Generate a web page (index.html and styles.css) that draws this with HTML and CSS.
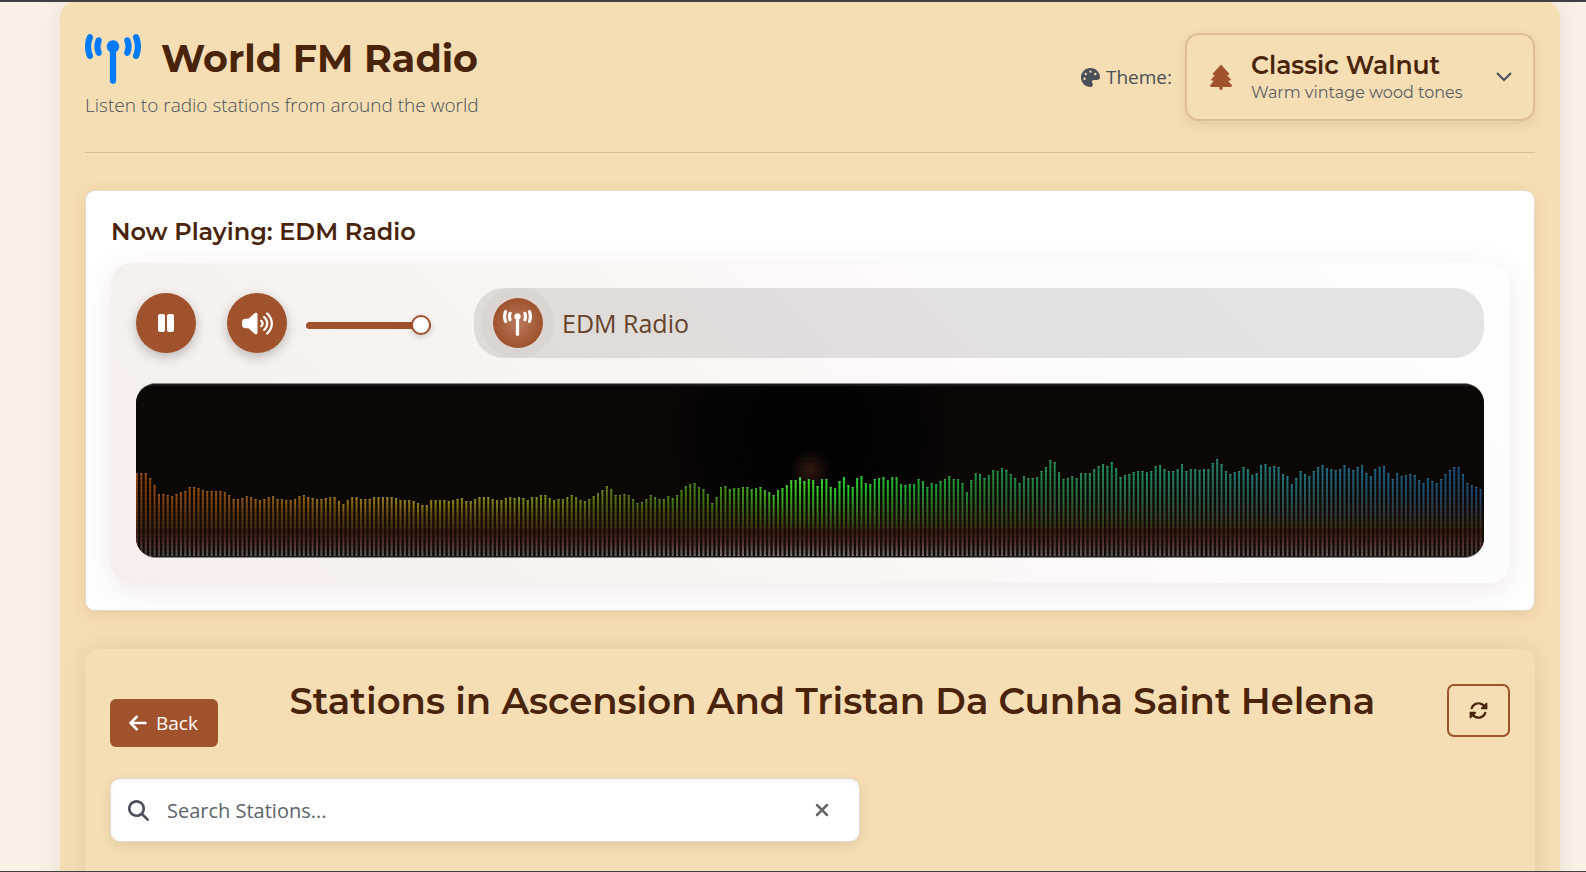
FILE: index.html
```html
<!DOCTYPE html>
<html lang="en">
<head>
<meta charset="utf-8">
<title>World FM Radio</title>
<link rel="stylesheet" href="styles.css">
</head>
<body>
<svg class="sprite" aria-hidden="true">
  <symbol id="tower" viewBox="0 0 576 512"><path d="M80.3 44C69.8 69.9 64 98.2 64 128s5.8 58.1 16.3 84c6.600 16.400-1.300 35-17.700 41.700s-35-1.300-41.700-17.700C7.400 202.600 0 166.100 0 128S7.400 53.400 20.900 20C27.600 3.600 46.200-4.300 62.600 2.300S86.900 27.600 80.300 44zM555.100 20C568.600 53.400 576 89.900 576 128s-7.400 74.600-20.900 108c-6.600 16.400-25.300 24.300-41.700 17.700s-24.300-25.300-17.700-41.700c10.500-25.900 16.300-54.200 16.300-84s-5.800-58.100-16.300-84C489.100 27.600 497 9 513.400 2.300s35 1.300 41.700 17.700zM352 128c0 23.700-12.900 44.400-32 55.400V480c0 17.700-14.300 32-32 32s-32-14.300-32-32V183.400c-19.100-11.100-32-31.700-32-55.400c0-35.300 28.700-64 64-64s64 28.700 64 64zM170.600 76.800C163.800 92.400 160 109.700 160 128s3.800 35.600 10.600 51.200c7.100 16.200-.3 35.100-16.500 42.100s-35.100-.3-42.100-16.500c-10.300-23.600-16-49.600-16-76.800s5.700-53.200 16-76.800c7.100-16.200 25.900-23.600 42.100-16.500s23.600 25.900 16.500 42.100zM464 51.200c10.300 23.600 16 49.600 16 76.800s-5.700 53.200-16 76.800c-7.100 16.200-25.900 23.600-42.100 16.500s-23.600-25.900-16.500-42.100c6.800-15.600 10.600-32.900 10.600-51.200s-3.800-35.600-10.600-51.200c-7.100-16.200 .3-35.100 16.500-42.100s35.100 .3 42.100 16.500z"/></symbol>
  <symbol id="palette" viewBox="0 0 512 512"><path fill-rule="evenodd" d="M512 256c0 .9 0 1.800 0 2.700c-.4 36.500-33.600 61.300-70.100 61.300H344c-26.500 0-48 21.500-48 48c0 3.400 .4 6.700 1 9.900c2.100 10.200 6.500 20 10.800 29.900c6.100 13.800 12.100 27.500 12.100 42c0 31.800-21.600 60.700-53.400 62c-3.500 .1-7 .2-10.600 .2C114.600 512 0 397.400 0 256S114.600 0 256 0S512 114.600 512 256zM128 288a32 32 0 1 0 -64 0 32 32 0 1 0 64 0zm0-96a32 32 0 1 0 0-64 32 32 0 1 0 0 64zM288 96a32 32 0 1 0 -64 0 32 32 0 1 0 64 0zm96 96a32 32 0 1 0 0-64 32 32 0 1 0 0 64z"/></symbol>
  <symbol id="tree" viewBox="0 0 448 512"><path d="M210.600 5.900L62 169.400c-3.900 4.200-6 9.800-6 15.500C56 197.700 66.300 208 79.100 208H104L30.600 281.400c-4.200 4.200-6.600 10-6.600 16C24 309.900 34.100 320 46.600 320H80L5.400 409.500C1.900 413.700 0 419 0 424.500c0 13 10.500 23.500 23.500 23.500H192v32c0 17.700 14.300 32 32 32s32-14.300 32-32V448H424.500c13 0 23.500-10.500 23.500-23.500c0-5.500-1.900-10.800-5.400-15L368 320h33.400c12.500 0 22.600-10.100 22.600-22.600c0-6-2.400-11.800-6.600-16L344 208h24.900c12.700 0 23.100-10.300 23.100-23.100c0-5.700-2.100-11.300-6-15.500L237.400 5.900C234 2.100 229.100 0 224 0s-10 2.100-13.400 5.900z"/></symbol>
  <symbol id="volume" viewBox="0 0 640 512"><path d="M533.600 32.500C598.500 85.200 640 165.800 640 256s-41.500 170.700-106.400 223.500c-10.300 8.400-25.400 6.800-33.800-3.500s-6.800-25.400 3.500-33.800C557.500 398.200 592 331.200 592 256s-34.500-142.200-88.700-186.300c-10.300-8.400-11.800-23.500-3.500-33.800s23.500-11.800 33.800-3.500zM473.100 107c43.200 35.200 70.900 88.900 70.900 149s-27.700 113.800-70.900 149c-10.300 8.400-25.400 6.800-33.800-3.500s-6.800-25.400 3.500-33.800C475.300 341.300 496 301.100 496 256s-20.700-85.300-53.200-111.800c-10.300-8.400-11.800-23.500-3.500-33.800s23.500-11.800 33.800-3.500zm-60.500 74.500C434.100 199.100 448 225.900 448 256s-13.900 56.900-35.400 74.500c-10.300 8.400-25.400 6.800-33.800-3.500s-6.800-25.400 3.500-33.800C393.100 284.400 400 271 400 256s-6.900-28.400-17.700-37.300c-10.300-8.400-11.800-23.500-3.500-33.800s23.500-11.800 33.800-3.500zM301.100 34.800C312.600 40 320 51.400 320 64V448c0 12.600-7.400 24-18.900 29.200s-25 3.100-34.400-5.300L131.800 352H64c-35.300 0-64-28.700-64-64V224c0-35.300 28.700-64 64-64h67.800L266.700 40.100c9.400-8.400 22.900-10.400 34.400-5.300z"/></symbol>
  <symbol id="pause" viewBox="0 0 16 18"><rect width="7" height="18" rx="2"/><rect x="9" width="7" height="18" rx="2"/></symbol>
  <symbol id="arrow-left" viewBox="0 0 448 512"><path d="M9.400 233.400c-12.500 12.500-12.500 32.800 0 45.300l160 160c12.500 12.500 32.800 12.500 45.300 0s12.500-32.800 0-45.300L109.200 288 416 288c17.700 0 32-14.300 32-32s-14.300-32-32-32l-306.700 0L214.600 118.600c12.500-12.500 12.500-32.800 0-45.300s-32.800-12.500-45.300 0l-160 160z"/></symbol>
  <symbol id="search" viewBox="0 0 512 512"><path d="M416 208c0 45.900-14.900 88.300-40 122.700L502.600 457.400c12.500 12.500 12.500 32.800 0 45.300s-32.800 12.500-45.300 0L330.700 376c-34.400 25.200-76.800 40-122.700 40C93.100 416 0 322.900 0 208S93.100 0 208 0S416 93.100 416 208zM208 352a144 144 0 1 0 0-288 144 144 0 1 0 0 288z"/></symbol>
  <symbol id="rotate" viewBox="0 0 512 512"><path d="M142.900 142.900c62.200-62.200 162.700-62.500 225.300-1L327 183c-6.900 6.900-8.900 17.200-5.200 26.200s12.500 14.800 22.200 14.800H480c9 0 16-7 16-16V64c0-9.700-5.800-14-12-16s-19.300 1-26.200 7L413.400 96.600c-87.600-86.500-228.700-86.200-315.800 1C73.200 122 55.600 150.700 44.800 181.400c-5.900 16.700 2.900 34.900 19.500 40.800s34.900-2.900 40.800-19.500c7.700-21.800 20.200-42.300 37.800-59.800zM16 304V448c0 9.700 5.800 14 12 16s19.300-1 26.200-7l44.400-41.600c87.600 86.500 228.700 86.200 315.800-1c24.400-24.400 42.100-53.100 52.900-83.700c5.900-16.700-2.900-34.900-19.500-40.800s-34.900 2.900-40.800 19.500c-7.700 21.800-20.200 42.300-37.800 59.800c-62.200 62.200-162.700 62.500-225.300 1L185 329c6.900-6.900 8.900-17.200 5.200-26.200s-12.500-14.800-22.200-14.800H32c-9 0-16 7-16 16z"/></symbol>
  <symbol id="chevron" viewBox="0 0 16 10"><path d="M1 1l7 7 7-7" fill="none" stroke="currentColor" stroke-width="2"/></symbol>
  <symbol id="xmark" viewBox="0 0 14 14"><path d="M2 2l10 10M12 2L2 12" fill="none" stroke="currentColor" stroke-width="2.500" stroke-linecap="round"/></symbol>
</svg>
<div class="window">
  <main class="container">
    <header class="header">
      <div>
        <h1 class="brand"><svg class="icon brand-icon"><use href="#tower"/></svg>World FM Radio</h1>
        <p class="tagline">Listen to radio stations from around the world</p>
      </div>
      <div class="theme">
        <span class="theme-label" id="theme-label"><svg class="icon palette-icon"><use href="#palette"/></svg>Theme:</span>
        <button class="theme-button" type="button" aria-describedby="theme-label">
          <svg class="icon tree-icon"><use href="#tree"/></svg>
          <span class="theme-text">
            <span class="theme-name">Classic Walnut</span>
            <span class="theme-note">Warm vintage wood tones</span>
          </span>
          <svg class="icon chevron-icon"><use href="#chevron"/></svg>
        </button>
      </div>
    </header>

    <section class="now-playing">
      <h2 class="now-title">Now Playing: EDM Radio</h2>
      <div class="player">
        <div class="controls">
          <button class="round-button" type="button" aria-label="Pause"><svg class="icon pause-icon"><use href="#pause"/></svg></button>
          <button class="round-button" type="button" aria-label="Mute"><svg class="icon volume-icon"><use href="#volume"/></svg></button>
          <input class="volume" type="range" min="0" max="100" value="100" aria-label="Volume">
          <div class="station">
            <span class="halo"><span class="station-badge"><svg class="icon badge-icon"><use href="#tower"/></svg></span></span>
            <span class="station-name">EDM Radio</span>
          </div>
        </div>
        <div class="visualizer"><canvas class="spectrum" id="spectrum"></canvas></div>
      </div>
    </section>

    <section class="stations">
      <div class="stations-head">
        <button class="back" type="button"><svg class="icon back-icon"><use href="#arrow-left"/></svg>Back</button>
        <h2 class="stations-title">Stations in Ascension And Tristan Da Cunha Saint Helena</h2>
        <button class="refresh" type="button" aria-label="Refresh"><svg class="icon refresh-icon"><use href="#rotate"/></svg></button>
      </div>
      <div class="search">
        <svg class="icon search-icon"><use href="#search"/></svg>
        <input class="search-input" type="text" placeholder="Search Stations..." aria-label="Search Stations">
        <button class="clear" type="button" aria-label="Clear search"><svg class="icon clear-icon"><use href="#xmark"/></svg></button>
      </div>
    </section>
  </main>
</div>
<script src="spectrum.js"></script>
</body>
</html>
```
FILE: styles.css
```css
* { box-sizing: border-box; }

body {
  margin: 0;
  background: #faf0e6;
  color: #4a230b;
  font-family: "Open Sans", "Noto Sans", sans-serif;
  font-size: 20px;
}

h1, h2, p { margin: 0; }
button, input { font: inherit; color: inherit; }
button { cursor: pointer; }

.sprite { position: absolute; width: 0; height: 0; }
.icon { display: block; flex: none; fill: currentColor; }

.window {
  height: 100vh;
  overflow: hidden;
  padding: 0 26px 0 60px;
  border-top: 2px solid #404040;
  border-bottom: 1px solid #404040;
}

.container {
  min-height: 960px;
  padding: 31px 25px;
  border-radius: 15px;
  background: #f5deb3;
  box-shadow: 0 0 24px rgba(74, 35, 11, 0.08);
}

.header {
  display: flex;
  justify-content: space-between;
  align-items: flex-start;
  padding-bottom: 31px;
  border-bottom: 1px solid #dfbe92;
}

.brand {
  display: flex;
  align-items: center;
  gap: 20px;
  font: 700 38px/52px Montserrat, Inter, sans-serif;
}
.brand-icon { width: 56px; height: 50px; color: #007bff; }
.tagline {
  padding-top: 7px;
  color: #495057;
  font-size: 19px;
  font-weight: 300;
  line-height: 27px;
}

.theme { display: flex; align-items: center; gap: 13px; }
.theme-label {
  display: flex;
  align-items: center;
  gap: 6px;
  color: #495057;
  font-size: 19px;
}
.palette-icon { width: 19px; height: 19px; }
.theme-button {
  display: flex;
  align-items: center;
  width: 350px;
  height: 88px;
  padding: 0 21px 0 23px;
  border: 2px solid #dfbe92;
  border-radius: 14px;
  background: #f5deb3;
  box-shadow: 0 4px 12px rgba(74, 35, 11, 0.1);
  font-family: Montserrat, Inter, sans-serif;
  text-align: left;
}
.tree-icon { width: 22px; height: 25px; color: #a0522d; }
.theme-text { flex: 1; margin-left: 19px; }
.theme-name { display: block; font-size: 25px; font-weight: 600; line-height: 30px; }
.theme-note { display: block; color: #5a5f64; font-size: 16px; line-height: 25px; }
.chevron-icon { width: 16px; height: 10px; color: #495057; }

.now-playing {
  margin-top: 37px;
  padding: 25px 25px 27px;
  border: 1px solid #e6d8d2;
  border-radius: 10px;
  background: #fff;
  box-shadow: 0 4px 16px rgba(160, 82, 45, 0.14);
  overflow: clip;
}
.now-title { font: 600 24px/32px Montserrat, Inter, sans-serif; }
.player {
  margin-top: 15px;
  padding: 25px;
  border-radius: 20px;
  background: linear-gradient(45deg, #f7eeeb, #f6f1ee 20%, #f9f5f2 45%, #fdfafa 65%, #fefefe);
  box-shadow: 0 8px 32px rgba(120, 40, 30, 0.1);
}
.controls { display: flex; align-items: center; }
.round-button {
  display: grid;
  place-items: center;
  width: 60px;
  height: 60px;
  margin-right: 31px;
  padding: 0;
  border: 0;
  border-radius: 50%;
  background: #a0522d;
  color: #fff;
  box-shadow: 0 4px 12px rgba(0, 0, 0, 0.24);
}
.round-button + .round-button { margin-right: 19px; }
.pause-icon { width: 16px; height: 18px; }
.volume-icon { width: 31px; height: 25px; }

.volume {
  appearance: none;
  width: 125px;
  height: 20px;
  margin: 5px 43px 0 0;
  background: transparent;
}
.volume::-webkit-slider-runnable-track {
  height: 7px;
  border-radius: 4px;
  background: #a0522d;
}
.volume::-webkit-slider-thumb {
  appearance: none;
  width: 20px;
  height: 20px;
  margin-top: -7px;
  border: 2px solid #a0522d;
  border-radius: 50%;
  background: #fff;
  box-shadow: 0 2px 6px rgba(0, 0, 0, 0.2);
}

.station {
  display: flex;
  flex: 1;
  align-items: center;
  height: 70px;
  padding-left: 7px;
  border-radius: 30px;
  background: rgba(0, 0, 0, 0.1);
}
.halo {
  display: grid;
  place-items: center;
  width: 73px;
  height: 70px;
  border-radius: 35px;
  background: rgba(160, 82, 45, 0.04);
}
.station-badge {
  display: grid;
  place-items: center;
  width: 50px;
  height: 50px;
  border-radius: 50%;
  background: radial-gradient(circle, #b87a5e, #a0522d 70%);
  color: #fff;
}
.badge-icon { width: 29px; height: 26px; }
.station-name { margin-left: 8px; color: #65432b; font-size: 25px; line-height: 36px; }

.visualizer {
  height: 175px;
  margin-top: 25px;
  border: 1px solid #8a8787;
  border-width: 1px 0;
  border-radius: 20px;
  background: #0c0805;
  overflow: hidden;
}
.spectrum { display: block; width: 100%; height: 100%; }

.stations {
  min-height: 300px;
  margin-top: 38px;
  padding: 26px 25px;
  border-radius: 15px;
  background: #f5deb3;
  box-shadow: 0 0 24px rgba(74, 35, 11, 0.1);
}
.stations-head { display: flex; justify-content: space-between; align-items: flex-start; }
.back {
  display: flex;
  align-items: center;
  gap: 9px;
  height: 48px;
  margin-top: 24px;
  padding: 0 20px 0 19px;
  border: 0;
  border-radius: 6px;
  background: #a0522d;
  color: #fff;
  font-size: 19px;
  font-weight: 500;
}
.back-icon { width: 18px; height: 20px; }
.stations-title { font: 600 37px/52px Montserrat, Inter, sans-serif; }
.refresh {
  display: grid;
  place-items: center;
  width: 63px;
  height: 53px;
  margin-top: 9px;
  border: 2px solid #a0522d;
  border-radius: 7px;
  background: transparent;
}
.refresh-icon { width: 19px; height: 19px; }

.search {
  display: flex;
  align-items: center;
  width: 750px;
  max-width: 100%;
  height: 64px;
  margin-top: 31px;
  padding: 0 30px 0 17px;
  border: 1px solid #e6d8d2;
  border-radius: 10px;
  background: #fff;
  box-shadow: 0 4px 12px rgba(74, 35, 11, 0.1), inset 0 2px 4px rgba(0, 0, 0, 0.04);
}
.search-icon { width: 21px; height: 21px; color: #495057; }
.search-input {
  flex: 1;
  min-width: 0;
  margin-left: 18px;
  padding: 0;
  border: 0;
  outline: 0;
  background: transparent;
  font-size: 20px;
}
.search-input::placeholder { color: #5c636a; opacity: 1; }
.clear { padding: 0; border: 0; background: transparent; color: #666; }
.clear-icon { width: 14px; height: 14px; }
```
FILE: spectrum.js
```js
// Height in pixels of each frequency band, low to high.
const levels = [
  84,84,84,79,72,63,63,62,61,63,65,66,70,70,69,67,66,66,66,66,65,62,58,58,59,61,60,58,57,58,60,61,58,58,
  57,57,58,61,62,60,59,58,58,59,60,60,56,53,57,60,60,58,58,58,60,60,60,60,60,59,57,57,57,56,54,52,52,57,
  57,57,57,56,57,58,59,56,56,58,60,60,60,58,57,57,59,60,59,60,59,57,60,60,62,62,59,57,58,58,60,62,60,
  57,56,58,61,64,67,71,68,62,62,63,62,58,54,55,58,62,60,58,58,61,59,62,67,71,73,74,70,68,63,54,60,70,71,
  68,69,69,70,70,68,69,70,67,65,62,67,69,72,77,77,80,76,78,77,71,78,78,70,69,76,80,72,70,79,81,74,73,78,
  79,80,77,80,80,73,72,73,73,78,76,70,74,73,76,78,81,78,78,74,65,77,84,83,79,82,87,86,89,87,83,79,74,81,79,
  79,80,86,90,97,95,85,78,79,81,79,84,84,84,88,91,93,91,95,89,80,82,83,85,86,86,85,86,91,92,88,86,86,88,
  93,86,88,88,87,88,88,94,98,93,86,83,85,86,90,88,82,84,92,93,90,91,90,83,81,73,79,86,83,81,86,90,92,89,
  88,87,88,92,89,87,90,92,84,81,88,90,91,84,78,84,81,82,83,82,77,74,79,76,74,78,83,87,90,90,83,74,72,70,68
];

// Colour stops across the width: position, then red, green, blue.
const stops = [
  [0, 150, 68, 16], [0.1, 155, 96, 20], [0.2, 165, 140, 22], [0.3, 130, 150, 22],
  [0.37, 85, 125, 20], [0.43, 62, 145, 22], [0.49, 60, 230, 40], [0.53, 35, 225, 45],
  [0.58, 30, 180, 50], [0.64, 30, 145, 66], [0.75, 30, 145, 98], [0.85, 30, 122, 130],
  [0.93, 26, 96, 134], [1, 22, 78, 128]
];

function colourAt(t) {
  let i = 1;
  while (i < stops.length - 1 && stops[i][0] < t) i++;
  const a = stops[i - 1], b = stops[i];
  const k = (t - a[0]) / (b[0] - a[0]);
  return [1, 2, 3].map(n => Math.round(a[n] + (b[n] - a[n]) * k));
}

const canvas = document.getElementById('spectrum');
const w = canvas.width = canvas.clientWidth;
const h = canvas.height = canvas.clientHeight;
const ctx = canvas.getContext('2d');

ctx.fillStyle = '#0c0805';
ctx.fillRect(0, 0, w, h);

// Dark pool in the middle with a faint ember at its heart.
let g = ctx.createRadialGradient(w / 2, 50, 60, w / 2, 50, 165);
g.addColorStop(0, 'rgba(3,3,3,1)');
g.addColorStop(1, 'rgba(3,3,3,0)');
ctx.fillStyle = g;
ctx.fillRect(0, 0, w, h);
g = ctx.createRadialGradient(w / 2, 86, 0, w / 2, 86, 20);
g.addColorStop(0, 'rgba(58,28,16,0.9)');
g.addColorStop(1, 'rgba(58,28,16,0)');
ctx.fillStyle = g;
ctx.fillRect(0, 0, w, h);

// Glow behind the lower part of the bars.
g = ctx.createLinearGradient(0, h - 60, 0, h);
g.addColorStop(0, 'rgba(30,16,8,0)');
g.addColorStop(0.5, 'rgba(30,14,8,0.9)');
g.addColorStop(1, 'rgba(16,12,11,0.9)');
ctx.fillStyle = g;
ctx.fillRect(0, h - 60, w, 60);

const pitch = w / levels.length;
levels.forEach((level, i) => {
  const t = i / (levels.length - 1);
  const [r, gr, b] = colourAt(t);
  const top = h - level;
  const shine = 100 + Math.round(35 * Math.exp(-Math.pow((t - 0.5) / 0.12, 2)));
  const edge = 1 - Math.min(1, Math.min(t, 1 - t) / 0.04);
  const foot = Math.round(shine * (1 - edge * 0.35));
  const grad = ctx.createLinearGradient(0, top, 0, h);
  const at = y => Math.max(0, Math.min(1, 1 - y / level));
  grad.addColorStop(0, `rgb(${r},${gr},${b})`);
  grad.addColorStop(at(42), `rgb(${Math.round(r * 0.35 + 42)},${Math.round(gr * 0.4 + 20)},${Math.round(b * 0.4 + 10)})`);
  grad.addColorStop(at(29), `rgb(${Math.round(r * 0.1 + 52)},${Math.round(gr * 0.12 + 38)},20)`);
  grad.addColorStop(at(27), 'rgb(56,27,16)');
  grad.addColorStop(at(14), 'rgb(84,52,42)');
  grad.addColorStop(1, `rgb(${foot + 6},${foot},${foot - 3})`);
  const x = i * pitch;
  ctx.fillStyle = grad;
  ctx.fillRect(x, top, 2, level);
  ctx.fillStyle = `rgb(${Math.round(r * 0.6 + 50)},${Math.round(gr * 0.6 + 50)},${Math.round(b * 0.6 + 50)})`;
  ctx.fillRect(x, top, 2, 1);
});

// Scan lines.
ctx.fillStyle = 'rgba(0,0,0,0.08)';
for (let y = 0; y < h; y += 4) ctx.fillRect(0, y, w, 2);
ctx.fillStyle = '#1d1b1a';
ctx.fillRect(0, 0, w, 2);
ctx.fillRect(0, h - 1, w, 1);
```
